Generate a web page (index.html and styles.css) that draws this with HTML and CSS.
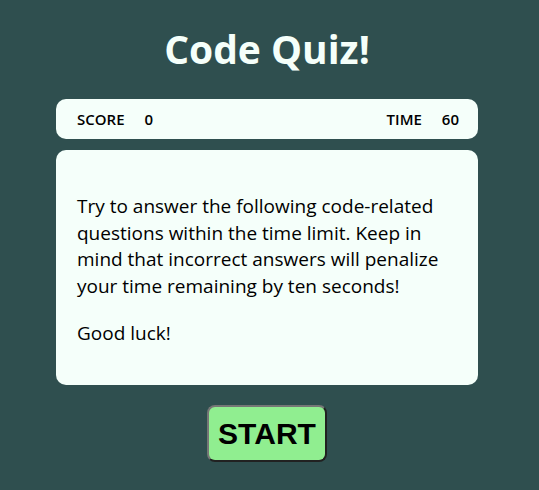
FILE: index.html
```html
<!DOCTYPE html>
<html>
<head>
<meta charset="utf-8">
<link rel="stylesheet" href="styles.css">
</head>
<body>
<main class="quiz">
  <h1 class="title">Code Quiz!</h1>
  <div class="status">
    <div class="stat"><span>SCORE</span><span>0</span></div>
    <div class="stat"><span>TIME</span><span>60</span></div>
  </div>
  <section class="card">
    <p>Try to answer the following code-related questions within the time limit. Keep in mind that incorrect answers will penalize your time remaining by ten seconds!</p>
    <p>Good luck!</p>
  </section>
  <div class="actions"><button class="start">START</button></div>
</main>
</body>
</html>
```
FILE: styles.css
```css
html, body { margin: 0; padding: 0; }
body {
  background: #2f4f4f;
  font-family: "Open Sans", "Noto Sans", sans-serif;
  color: #000;
  height: 490px;
}
.quiz {
  width: 422px;
  margin-left: 56px;
  display: flex;
  flex-direction: column;
}
.title {
  margin: 21px 0 0;
  height: 55px;
  line-height: 55px;
  text-align: center;
  color: #f5fffa;
  font-size: 39px;
  font-weight: 700;
}
.status {
  margin-top: 23px;
  height: 40px;
  background: #f5fffa;
  border-radius: 10px;
  display: flex;
  justify-content: space-between;
  align-items: center;
  padding: 0 19px 0 21px;
  font-size: 15px;
  font-weight: 600;
}
.stat { display: flex; gap: 20px; }
.card {
  margin-top: 11px;
  height: 235px;
  box-sizing: border-box;
  background: #f5fffa;
  border-radius: 10px;
  padding: 43px 21px 0;
  font-size: 19px;
  line-height: 26.7px;
}
.card p { margin: 0 0 20px; }
.actions {
  display: flex;
  justify-content: center;
  margin-top: 20px;
}
.start {
  width: 120px;
  height: 57px;
  background: #90ee90;
  border: 2px outset #767676;
  border-radius: 8px;
  font-family: "Liberation Sans", Arial, sans-serif;
  font-weight: 700;
  font-size: 30px;
  color: #000;
  padding: 0;
}
```
